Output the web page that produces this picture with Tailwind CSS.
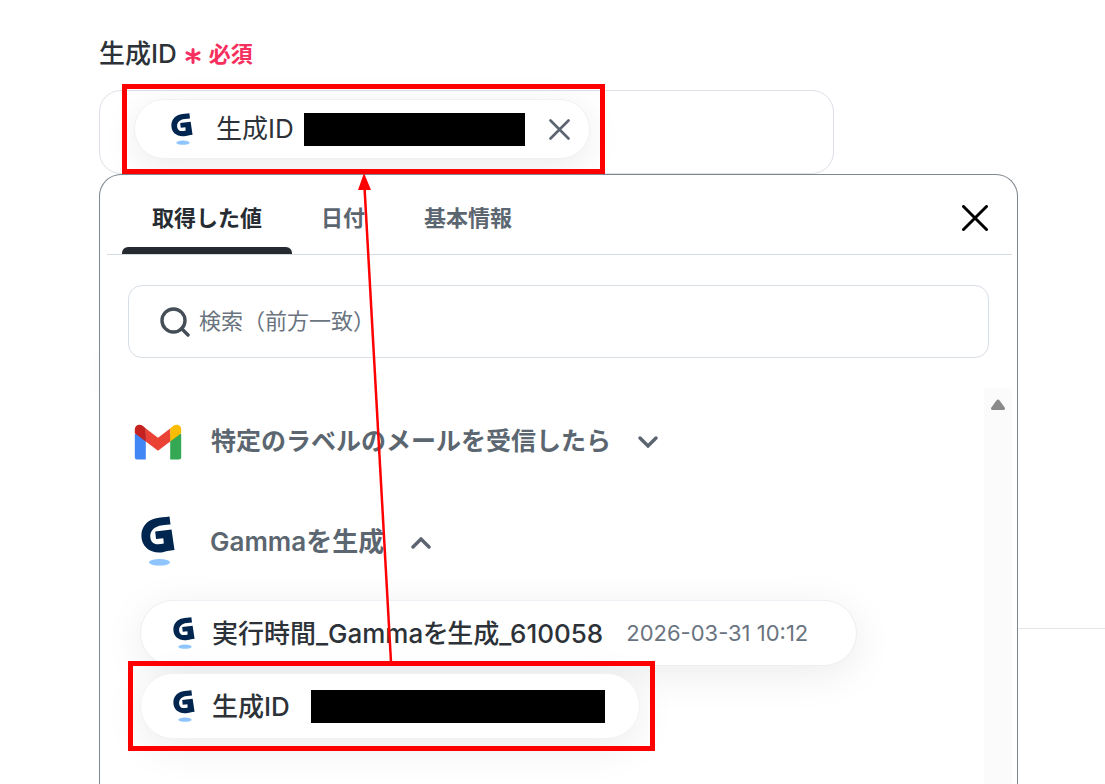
<!DOCTYPE html>
<html lang="ja">

<head>
    <meta charset="UTF-8">
    <meta name="viewport" content="width=device-width, initial-scale=1.0">
    <title>生成ID</title>
    <script src="https://cdn.jsdelivr.net/npm/@tailwindcss/browser@4"></script>
</head>

<body class="bg-white font-['Inter','Noto_Sans_CJK_JP',sans-serif] text-[#2c3238] overflow-hidden">
    <!-- Shared icon shapes -->
    <svg class="hidden">
        <symbol id="gamma" viewBox="0 0 34 50">
            <path fill="#00254f" d="M28.5 .5 29.500 8.500 C24 9 19 9 15.500 11 C11 13 9 17 9.300 21 C9.700 26 13 28.500 17 28.300 C19 28.300 21 28 22.800 27.500 L22.300 22.300 L15 23.100 L14.200 15.600 L30.500 13.500 L33.500 34 L28 34.700 C24 35.500 21 36.500 18 36.500 C8 36.500 .8 30 .4 20.500 C0 11 6 4.500 14 2.500 C19 1.300 24 1.200 28.500 .5Z" />
            <ellipse fill="#8ec5ff" cx="18.500" cy="46.300" rx="10.500" ry="3.300" />
        </symbol>
    </svg>

    <main class="relative flex h-screen flex-col pt-9 pl-[99px] pr-[87px]">
        <div class="absolute right-0 top-[628px] h-px w-1/2 bg-[#e3e5e8]"></div>
        <div class="absolute left-[112px] top-[345px] h-[50px] w-1/4 rounded-full shadow-[0_4px_30px_rgba(0,0,0,0.10)]"></div>

        <!-- Field label -->
        <div class="mb-[18px] flex h-9 shrink-0 items-center">
            <label for="generationId" class="text-[26px] leading-9 font-medium">生成ID</label>
            <svg class="ml-2 mt-1 size-4 shrink-0" viewBox="0 0 16 16" stroke="#f62f5e" stroke-width="3" stroke-linecap="round">
                <path d="M8 1.500v13M2 4.700l12 6.600M14 4.700 2 11.300" />
            </svg>
            <span class="ml-2 text-[22px] leading-9 font-semibold text-[#f62f5e]">必須</span>
        </div>

        <!-- Selected value -->
        <div class="flex h-[84px] w-4/5 shrink-0 items-start rounded-[22px] border border-[#dce1e7] pl-[34px] pt-2">
            <div class="relative flex h-[60px] shrink-0 items-center rounded-full border border-[#eef2f6] bg-white pl-9 pr-[19px] shadow-[0_8px_36px_rgba(0,0,0,0.08)]">
                <svg class="h-8 w-[22px]"><use href="#gamma" /></svg>
                <span class="ml-[23px] text-[26px] leading-9">生成ID</span>
                <span class="ml-2.5 h-[33px] w-[221px] bg-black"></span>
                <button type="button" aria-label="削除" class="ml-6">
                    <svg class="size-[21px]" viewBox="0 0 21 21" stroke="#5b6470" stroke-width="2.600" stroke-linecap="round"><path d="m1.500 1.500 18 18m0-18-18 18" /></svg>
                </button>
                <div class="absolute -inset-4 -left-[13px] z-10 border-[5px] border-[#ff0000]"></div>
            </div>
            <input id="generationId" type="text" class="h-[60px] min-w-0 flex-1 outline-none">
        </div>

        <!-- Value picker -->
        <section class="relative flex min-h-0 flex-1 flex-col rounded-t-[22px] border border-b-0 border-[#7f8790] bg-white">
            <div class="ml-[7px] mr-[5px] flex h-20 shrink-0 items-stretch border-b border-[#d3dae2] pl-[15px] pr-6 text-[22px] font-semibold text-[#5b6670]">
                <button type="button" class="relative px-[30px] pt-[7px] text-[#262c32]">取得した値
                    <span class="absolute inset-x-0 bottom-0 h-[7px] rounded-t-md bg-[#252a31]"></span>
                </button>
                <button type="button" class="px-[29px] pt-[7px]">日付</button>
                <button type="button" class="px-[30px] pt-[7px]">基本情報</button>
                <button type="button" aria-label="閉じる" class="ml-auto pt-[7px]">
                    <svg class="size-[26px]" viewBox="0 0 26 26" stroke="#000" stroke-width="3" stroke-linecap="round"><path d="m1.500 1.500 23 23m0-23-23 23" /></svg>
                </button>
            </div>

            <label class="mx-7 mt-[30px] flex h-[73px] shrink-0 items-center gap-[9px] rounded-[14px] border border-[#d8dee5] px-[31px]">
                <svg class="size-[30px] shrink-0" viewBox="0 0 30 30" fill="none" stroke="#454d57" stroke-width="3.400" stroke-linecap="round"><circle cx="13.500" cy="13.500" r="11.500" /><path d="m21.500 21.500 6.500 6.500" /></svg>
                <input type="text" aria-label="検索" placeholder="検索（前方一致）" class="min-w-0 flex-1 text-[22px] outline-none placeholder:text-[#6a7480]">
            </label>

            <div class="mr-[5px] mt-[30px] flex min-h-0 flex-1">
                <div class="flex-1 pl-10">
                    <button type="button" aria-expanded="false" class="-ml-1.5 mt-9 flex h-9 items-center text-[25px] font-semibold text-[#5b6670]">
                        <svg class="h-9 w-12 shrink-0" viewBox="0 0 48 36">
                            <path fill="#4285f4" d="M.8 10h11v25.500H3A2.200 2.200 0 0 1 .8 33.300Z" />
                            <path fill="#34a853" d="M36.200 10h11v23.300a2.200 2.200 0 0 1-2.200 2.200h-8.800Z" />
                            <path fill="#ea4335" d="M11.800 4.500 24 13.700l12.200-9.200v13L24 26.700l-12.200-9.200Z" />
                            <path fill="#c5221f" d="M.8 5.500C.8 1 5.500-.8 9 2l2.800 2.500v13L.8 9.300Z" />
                            <path fill="#fbbc04" d="M47.200 5.500C47.200 1 42.500-.8 39 2l-2.800 2.500v13l11-8.200Z" />
                        </svg>
                        <span class="ml-[29px]">特定のラベルのメールを受信したら</span>
                        <svg class="ml-[27px] h-3 w-5" viewBox="0 0 20 12" fill="none" stroke="#5b6470" stroke-width="3.400" stroke-linecap="round"><path d="m2 2 8 8 8-8" /></svg>
                    </button>
                    <button type="button" aria-expanded="true" class="ml-px mt-14 flex h-[50px] items-center text-[26px] font-semibold text-[#5b6670]">
                        <svg class="h-[50px] w-[34px] shrink-0"><use href="#gamma" /></svg>
                        <span class="ml-[35px]">Gammaを生成</span>
                        <svg class="ml-[27px] mt-1 h-3 w-5" viewBox="0 0 20 12" fill="none" stroke="#5b6470" stroke-width="3.400" stroke-linecap="round"><path d="m2 10 8-8 8 8" /></svg>
                    </button>

                    <div class="mt-[34px] flex flex-col items-start gap-[7px] font-['Inter','Noto_Sans_CJK_JP_Medium','Noto_Sans_CJK_JP',sans-serif] text-[26px] font-medium [font-feature-settings:'palt']">
                        <button type="button" class="flex h-[66px] items-center rounded-full border border-[#eceff3] bg-white pl-8 pr-12 shadow-[0_8px_40px_rgba(0,0,0,0.08)]">
                            <svg class="h-8 w-[22px]"><use href="#gamma" /></svg>
                            <span class="ml-[17px]">実行時間_Gammaを生成_610058</span>
                            <time class="ml-[23px] text-[22px] font-normal text-[#6a7480]">2026-03-31 10:12</time>
                        </button>
                        <button type="button" class="relative flex h-[66px] items-center rounded-full border border-[#f0f3f6] bg-white pl-8 pr-[34px] shadow-[0_8px_40px_rgba(0,0,0,0.08)]">
                            <svg class="h-8 w-[22px]"><use href="#gamma" /></svg>
                            <span class="ml-[17px]">生成ID</span>
                            <span class="ml-[21px] h-[33px] w-[294px] bg-black"></span>
                            <span class="absolute -inset-[13px] -right-4 border-[5px] border-[#ff0000]"></span>
                        </button>
                    </div>
                </div>

                <!-- Scrollbar -->
                <div class="flex w-7 justify-center bg-[#fbfbfb] pt-[11px]">
                    <svg class="h-3 w-4" viewBox="0 0 16 12" fill="#8a8a8a" stroke="#8a8a8a" stroke-width="3" stroke-linejoin="round"><path d="M8 2 13.500 9.500h-11Z" /></svg>
                </div>
            </div>
        </section>

        <!-- Arrow from the picked value to the field -->
        <svg class="pointer-events-none absolute left-[350px] top-[173px] z-20 h-[490px] w-[50px]" viewBox="0 0 50 490" fill="#ff0000">
            <path d="M41 489 14.500 14" stroke="#ff0000" stroke-width="2.500" />
            <path d="m14 0 7 17H8Z" />
        </svg>
    </main>
</body>

</html>
